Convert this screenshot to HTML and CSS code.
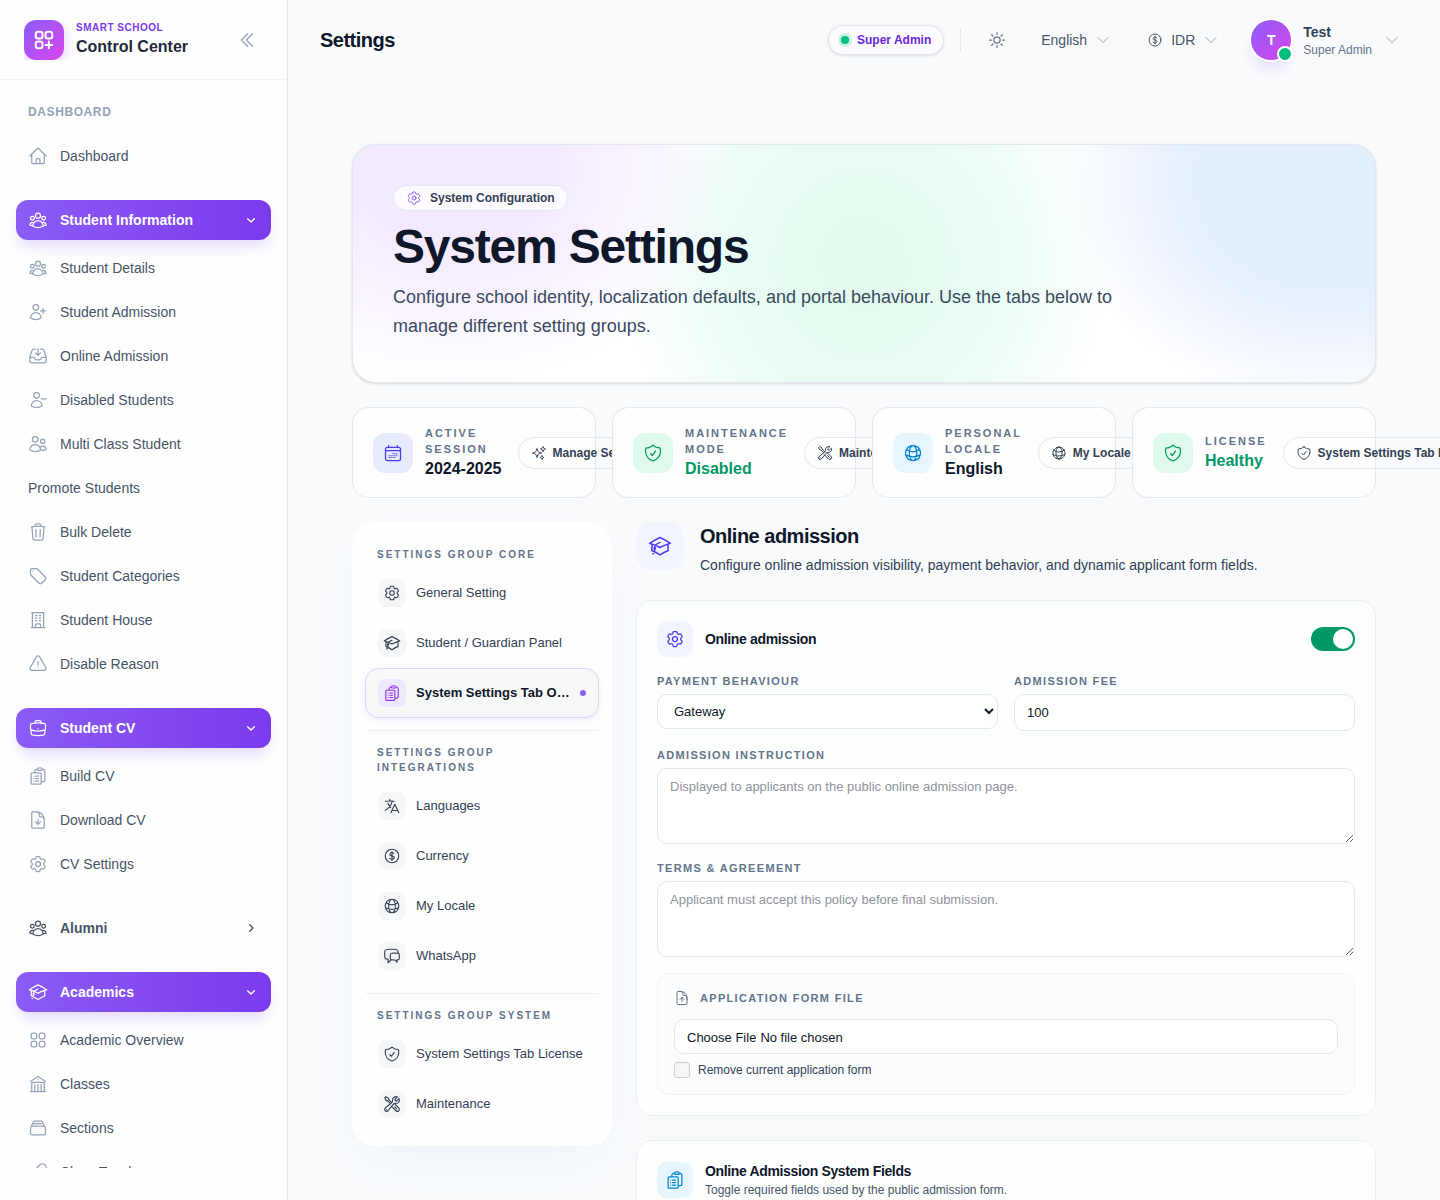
FILE: index.html
```html
<!DOCTYPE html>
<html lang="en">
<head>
    <meta charset="UTF-8">
    <meta name="viewport" content="width=device-width, initial-scale=1.0">
    <title>Settings</title>
    <link rel="stylesheet" href="styles.css">
</head>
<body>
    <!-- icon sprite -->
    <svg class="sprite" aria-hidden="true">
        <symbol id="home" viewBox="0 0 24 24"><path d="m2.25 12 8.954-8.955c.44-.439 1.152-.439 1.591 0L21.75 12M4.5 9.75v10.125c0 .621.504 1.125 1.125 1.125H9.75v-4.875c0-.621.504-1.125 1.125-1.125h2.25c.621 0 1.125.504 1.125 1.125V21h4.125c.621 0 1.125-.504 1.125-1.125V9.75M8.25 21h8.25"/></symbol>
        <symbol id="user-group" viewBox="0 0 24 24"><path d="M18 18.72a9.094 9.094 0 0 0 3.741-.479 3 3 0 0 0-4.682-2.72m.94 3.198.001.031c0 .225-.012.447-.037.666A11.944 11.944 0 0 1 12 21c-2.17 0-4.207-.576-5.963-1.584A6.062 6.062 0 0 1 6 18.719m12 0a5.971 5.971 0 0 0-.941-3.197m0 0A5.995 5.995 0 0 0 12 12.75a5.995 5.995 0 0 0-5.058 2.772m0 0a3 3 0 0 0-4.681 2.72 8.986 8.986 0 0 0 3.74.477m.94-3.197a5.971 5.971 0 0 0-.94 3.197M15 6.75a3 3 0 1 1-6 0 3 3 0 0 1 6 0Zm6 3a2.25 2.25 0 1 1-4.5 0 2.25 2.25 0 0 1 4.5 0Zm-13.5 0a2.25 2.25 0 1 1-4.5 0 2.25 2.25 0 0 1 4.5 0Z"/></symbol>
        <symbol id="user-plus" viewBox="0 0 24 24"><path d="M18 7.5v3m0 0v3m0-3h3m-3 0h-3m-2.25-4.125a3.375 3.375 0 1 1-6.75 0 3.375 3.375 0 0 1 6.75 0ZM3 19.235v-.11a6.375 6.375 0 0 1 12.75 0v.109A12.318 12.318 0 0 1 9.374 21c-2.331 0-4.512-.645-6.374-1.766Z"/></symbol>
        <symbol id="inbox" viewBox="0 0 24 24"><path d="M9 3.75H6.912a2.25 2.25 0 0 0-2.15 1.588L2.35 13.177a2.25 2.25 0 0 0-.1.661V18a2.25 2.25 0 0 0 2.25 2.25h15A2.25 2.25 0 0 0 21.75 18v-4.162c0-.224-.034-.447-.1-.661L19.24 5.338a2.25 2.25 0 0 0-2.15-1.588H15M2.25 13.5h3.86a2.25 2.25 0 0 1 2.012 1.244l.256.512a2.25 2.25 0 0 0 2.013 1.244h3.218a2.25 2.25 0 0 0 2.013-1.244l.256-.512a2.25 2.25 0 0 1 2.013-1.244h3.859M12 3v8.25m0 0-3-3m3 3 3-3"/></symbol>
        <symbol id="user-minus" viewBox="0 0 24 24"><path d="M22 10.5h-6m-2.25-4.125a3.375 3.375 0 1 1-6.75 0 3.375 3.375 0 0 1 6.75 0ZM4 19.235v-.11a6.375 6.375 0 0 1 12.75 0v.109A12.318 12.318 0 0 1 10.374 21c-2.331 0-4.512-.645-6.374-1.766Z"/></symbol>
        <symbol id="users" viewBox="0 0 24 24"><path d="M15 19.128a9.38 9.38 0 0 0 2.625.372 9.337 9.337 0 0 0 4.121-.952 4.125 4.125 0 0 0-7.533-2.493M15 19.128v-.003c0-1.113-.285-2.16-.786-3.07M15 19.128v.106A12.318 12.318 0 0 1 8.624 21c-2.331 0-4.512-.645-6.374-1.766l-.001-.109a6.375 6.375 0 0 1 11.964-3.07M12 6.375a3.375 3.375 0 1 1-6.75 0 3.375 3.375 0 0 1 6.75 0Zm8.25 2.25a2.625 2.625 0 1 1-5.25 0 2.625 2.625 0 0 1 5.25 0Z"/></symbol>
        <symbol id="trash" viewBox="0 0 24 24"><path d="m14.74 9-.346 9m-4.788 0L9.26 9m9.968-3.21c.342.052.682.107 1.022.166m-1.022-.165L18.16 19.673a2.25 2.25 0 0 1-2.244 2.077H8.084a2.25 2.25 0 0 1-2.244-2.077L4.772 5.79m14.456 0a48.108 48.108 0 0 0-3.478-.397m-12 .562c.34-.059.68-.114 1.022-.165m0 0a48.11 48.11 0 0 1 3.478-.397m7.5 0v-.916c0-1.18-.91-2.164-2.09-2.201a51.964 51.964 0 0 0-3.32 0c-1.18.037-2.09 1.022-2.09 2.201v.916m7.5 0a48.667 48.667 0 0 0-7.5 0"/></symbol>
        <symbol id="tag" viewBox="0 0 24 24"><path d="M9.568 3H5.25A2.25 2.25 0 0 0 3 5.25v4.318c0 .597.237 1.17.659 1.591l9.581 9.581c.699.699 1.78.872 2.607.33a18.095 18.095 0 0 0 5.223-5.223c.542-.827.369-1.908-.33-2.607L11.16 3.66A2.25 2.25 0 0 0 9.568 3Z"/><path d="M6 6h.008v.008H6V6Z"/></symbol>
        <symbol id="building" viewBox="0 0 24 24"><path d="M3.75 21h16.5M4.5 3h15M5.25 3v18m13.5-18v18M9 6.75h1.5m-1.5 3h1.5m-1.5 3h1.5m3-6H15m-1.5 3H15m-1.5 3H15M9 21v-3.375c0-.621.504-1.125 1.125-1.125h3.75c.621 0 1.125.504 1.125 1.125V21"/></symbol>
        <symbol id="warning" viewBox="0 0 24 24"><path d="M12 9v3.75m-9.303 3.376c-.866 1.5.217 3.374 1.948 3.374h14.71c1.73 0 2.813-1.874 1.948-3.374L13.949 3.378c-.866-1.5-3.032-1.5-3.898 0L2.697 16.126ZM12 15.75h.007v.008H12v-.008Z"/></symbol>
        <symbol id="briefcase" viewBox="0 0 24 24"><path d="M20.25 14.15v4.25c0 1.094-.787 2.036-1.872 2.18-2.087.277-4.216.42-6.378.42s-4.291-.143-6.378-.42c-1.085-.144-1.872-1.086-1.872-2.18v-4.25m16.5 0a2.18 2.18 0 0 0 .75-1.661V8.706c0-1.081-.768-2.015-1.837-2.175a48.114 48.114 0 0 0-3.413-.387m4.5 8.006c-.194.165-.42.295-.673.38A23.978 23.978 0 0 1 12 15.75c-2.648 0-5.195-.429-7.577-1.22a2.016 2.016 0 0 1-.673-.38m0 0A2.18 2.18 0 0 1 3 12.489V8.706c0-1.081.768-2.015 1.837-2.175a48.111 48.111 0 0 1 3.413-.387m7.5 0V5.25A2.25 2.25 0 0 0 13.5 3h-3a2.25 2.25 0 0 0-2.25 2.25v.894m7.5 0a48.667 48.667 0 0 0-7.5 0M12 12.75h.008v.008H12v-.008Z"/></symbol>
        <symbol id="clipboard" viewBox="0 0 24 24"><path d="M9 12h3.75M9 15h3.75M9 18h3.75m3 .75H18a2.25 2.25 0 0 0 2.25-2.25V6.108c0-1.135-.845-2.098-1.976-2.192a48.424 48.424 0 0 0-1.123-.08m-5.801 0c-.065.21-.1.433-.1.664 0 .414.336.75.75.75h4.5a.75.75 0 0 0 .75-.75 2.25 2.25 0 0 0-.1-.664m-5.8 0A2.251 2.251 0 0 1 13.5 2.25H15c1.012 0 1.867.668 2.15 1.586m-5.8 0c-.376.023-.75.05-1.124.08C9.095 4.01 8.25 4.973 8.25 6.108V8.25m0 0H4.875c-.621 0-1.125.504-1.125 1.125v11.25c0 .621.504 1.125 1.125 1.125h9.75c.621 0 1.125-.504 1.125-1.125V9.375c0-.621-.504-1.125-1.125-1.125H8.25ZM6.75 12h.008v.008H6.75V12Zm0 3h.008v.008H6.75V15Zm0 3h.008v.008H6.75V18Z"/></symbol>
        <symbol id="doc-down" viewBox="0 0 24 24"><path d="M19.5 14.25v-2.625a3.375 3.375 0 0 0-3.375-3.375h-1.5A1.125 1.125 0 0 1 13.5 7.125v-1.5a3.375 3.375 0 0 0-3.375-3.375H8.25m.75 12 3 3m0 0 3-3m-3 3v-6m-1.5-9H5.625c-.621 0-1.125.504-1.125 1.125v17.25c0 .621.504 1.125 1.125 1.125h12.75c.621 0 1.125-.504 1.125-1.125V11.25a9 9 0 0 0-9-9Z"/></symbol>
        <symbol id="doc-up" viewBox="0 0 24 24"><path d="M19.5 14.25v-2.625a3.375 3.375 0 0 0-3.375-3.375h-1.5A1.125 1.125 0 0 1 13.5 7.125v-1.5a3.375 3.375 0 0 0-3.375-3.375H8.25m6.75 12-3-3m0 0-3 3m3-3v6m-1.5-15H5.625c-.621 0-1.125.504-1.125 1.125v17.25c0 .621.504 1.125 1.125 1.125h12.75c.621 0 1.125-.504 1.125-1.125V11.25a9 9 0 0 0-9-9Z"/></symbol>
        <symbol id="cog" viewBox="0 0 24 24"><path d="M9.594 3.94c.09-.542.56-.94 1.11-.94h2.593c.55 0 1.02.398 1.11.94l.213 1.281c.063.374.313.686.645.87.074.04.147.083.22.127.325.196.72.257 1.075.124l1.217-.456a1.125 1.125 0 0 1 1.37.49l1.296 2.247a1.125 1.125 0 0 1-.26 1.431l-1.003.827c-.293.241-.438.613-.43.992a7.723 7.723 0 0 1 0 .255c-.008.378.137.75.43.991l1.004.827c.424.35.534.955.26 1.43l-1.298 2.247a1.125 1.125 0 0 1-1.369.491l-1.217-.456c-.355-.133-.75-.072-1.076.124a6.47 6.47 0 0 1-.22.128c-.331.183-.581.495-.644.869l-.213 1.281c-.09.543-.56.94-1.11.94h-2.594c-.55 0-1.019-.398-1.11-.94l-.213-1.281c-.062-.374-.312-.686-.644-.87a6.52 6.52 0 0 1-.22-.127c-.325-.196-.72-.257-1.076-.124l-1.217.456a1.125 1.125 0 0 1-1.369-.49l-1.297-2.247a1.125 1.125 0 0 1 .26-1.431l1.004-.827c.292-.24.437-.613.43-.991a6.932 6.932 0 0 1 0-.255c.007-.38-.138-.751-.43-.992l-1.004-.827a1.125 1.125 0 0 1-.26-1.43l1.297-2.247a1.125 1.125 0 0 1 1.37-.491l1.216.456c.356.133.751.072 1.076-.124.072-.044.146-.086.22-.128.332-.183.582-.495.644-.869l.214-1.28Z"/><path d="M15 12a3 3 0 1 1-6 0 3 3 0 0 1 6 0Z"/></symbol>
        <symbol id="cap" viewBox="0 0 24 24"><path d="M4.26 10.147a60.438 60.438 0 0 0-.491 6.347A48.62 48.62 0 0 1 12 20.904a48.62 48.62 0 0 1 8.232-4.41 60.46 60.46 0 0 0-.491-6.347m-15.482 0a50.636 50.636 0 0 0-2.658-.813A59.906 59.906 0 0 1 12 3.493a59.903 59.903 0 0 1 10.399 5.84c-.896.248-1.783.52-2.658.814m-15.482 0A50.717 50.717 0 0 1 12 13.489a50.702 50.702 0 0 1 7.74-3.342M6.75 15a.75.75 0 1 0 0-1.5.75.75 0 0 0 0 1.5Zm0 0v-3.675A55.378 55.378 0 0 1 12 8.443m-7.007 11.55A5.981 5.981 0 0 0 6.75 15.75v-1.5"/></symbol>
        <symbol id="squares" viewBox="0 0 24 24"><path d="M3.75 6A2.25 2.25 0 0 1 6 3.75h2.25A2.25 2.25 0 0 1 10.5 6v2.25a2.25 2.25 0 0 1-2.25 2.25H6a2.25 2.25 0 0 1-2.25-2.25V6ZM3.75 15.75A2.25 2.25 0 0 1 6 13.5h2.25a2.25 2.25 0 0 1 2.25 2.25V18a2.25 2.25 0 0 1-2.25 2.25H6A2.25 2.25 0 0 1 3.75 18v-2.25ZM13.5 6a2.25 2.25 0 0 1 2.25-2.25H18A2.25 2.25 0 0 1 20.25 6v2.25A2.25 2.25 0 0 1 18 10.5h-2.25a2.25 2.25 0 0 1-2.25-2.25V6ZM13.5 15.75a2.25 2.25 0 0 1 2.25-2.25H18a2.25 2.25 0 0 1 2.25 2.25V18A2.25 2.25 0 0 1 18 20.25h-2.25A2.25 2.25 0 0 1 13.5 18v-2.25Z"/></symbol>
        <symbol id="squares-plus" viewBox="0 0 24 24"><path d="M13.5 16.875h3.375m0 0h3.375m-3.375 0V13.5m0 3.375v3.375M6 10.5h2.25a2.25 2.25 0 0 0 2.25-2.25V6a2.25 2.25 0 0 0-2.25-2.25H6A2.25 2.25 0 0 0 3.75 6v2.25A2.25 2.25 0 0 0 6 10.5Zm0 9.75h2.25A2.25 2.25 0 0 0 10.5 18v-2.25a2.25 2.25 0 0 0-2.25-2.25H6a2.25 2.25 0 0 0-2.25 2.25V18A2.25 2.25 0 0 0 6 20.25Zm9.75-9.75H18a2.25 2.25 0 0 0 2.25-2.25V6A2.25 2.25 0 0 0 18 3.75h-2.25A2.25 2.25 0 0 0 13.5 6v2.25a2.25 2.25 0 0 0 2.25 2.25Z"/></symbol>
        <symbol id="library" viewBox="0 0 24 24"><path d="M12 21v-8.25M15.75 21v-8.25M8.25 21v-8.25M3 9l9-6 9 6m-1.5 12V10.332A48.36 48.36 0 0 0 12 9.75c-2.551 0-5.056.2-7.5.582V21M3 21h18M12 6.75h.008v.008H12V6.75Z"/></symbol>
        <symbol id="stack" viewBox="0 0 24 24"><path d="M6 6.878V6a2.25 2.25 0 0 1 2.25-2.25h7.5A2.25 2.25 0 0 1 18 6v.878m-12 0c.235-.083.487-.128.75-.128h10.5c.263 0 .515.045.75.128m-12 0A2.25 2.25 0 0 0 4.5 9v.878m13.5-3A2.25 2.25 0 0 1 19.5 9v.878m0 0a2.246 2.246 0 0 0-.75-.128H5.25c-.263 0-.515.045-.75.128m15 0A2.25 2.25 0 0 1 21 12v6a2.25 2.25 0 0 1-2.25 2.25H5.25A2.25 2.25 0 0 1 3 18v-6c0-.98.626-1.813 1.5-2.122"/></symbol>
        <symbol id="link" viewBox="0 0 24 24"><path d="M13.19 8.688a4.5 4.5 0 0 1 1.242 7.244l-4.5 4.5a4.5 4.5 0 0 1-6.364-6.364l1.757-1.757m13.35-.622 1.757-1.757a4.5 4.5 0 0 0-6.364-6.364l-4.5 4.5a4.5 4.5 0 0 0 1.242 7.244"/></symbol>
        <symbol id="collapse" viewBox="0 0 24 24"><path d="m18.75 4.5-7.5 7.5 7.5 7.5m-6-15L5.25 12l7.5 7.5"/></symbol>
        <symbol id="caret-down" viewBox="0 0 24 24"><path d="m7 10 5 5 5-5"/></symbol>
        <symbol id="caret-right" viewBox="0 0 24 24"><path d="m10 7 5 5-5 5"/></symbol>
        <symbol id="chevron" viewBox="0 0 24 24"><path d="m19.5 8.25-7.5 7.5-7.5-7.5"/></symbol>
        <symbol id="sun" viewBox="0 0 24 24"><path d="M12 3v2.25m6.364.386-1.591 1.591M21 12h-2.25m-.386 6.364-1.591-1.591M12 18.75V21m-4.773-4.227-1.591 1.591M5.25 12H3m4.227-4.773L5.636 5.636M15.75 12a3.75 3.75 0 1 1-7.5 0 3.75 3.75 0 0 1 7.5 0Z"/></symbol>
        <symbol id="dollar" viewBox="0 0 24 24"><path d="M12 6v12m-3-2.818.879.659c1.171.879 3.07.879 4.242 0 1.172-.879 1.172-2.303 0-3.182C13.536 12.219 12.768 12 12 12c-.725 0-1.45-.22-2.003-.659-1.106-.879-1.106-2.303 0-3.182s2.9-.879 4.006 0l.415.33M21 12a9 9 0 1 1-18 0 9 9 0 0 1 18 0Z"/></symbol>
        <symbol id="calendar" viewBox="0 0 24 24"><path d="M6.75 3v2.25M17.25 3v2.25M3 18.75V7.5a2.25 2.25 0 0 1 2.25-2.25h13.5A2.25 2.25 0 0 1 21 7.5v11.25m-18 0A2.25 2.25 0 0 0 5.25 21h13.5A2.25 2.25 0 0 0 21 18.75m-18 0v-7.5A2.25 2.25 0 0 1 5.25 9h13.5A2.25 2.25 0 0 1 21 11.25v7.5m-9-6h.008v.008H12v-.008ZM12 15h.008v.008H12V15Zm0 2.25h.008v.008H12v-.008ZM9.75 15h.008v.008H9.75V15Zm0 2.25h.008v.008H9.75v-.008ZM7.5 15h.008v.008H7.5V15Zm0 2.25h.008v.008H7.5v-.008Zm6.75-4.5h.008v.008h-.008v-.008Zm0 2.25h.008v.008h-.008V15Zm0 2.25h.008v.008h-.008v-.008Zm2.25-4.5h.008v.008H16.5v-.008Zm0 2.25h.008v.008H16.5V15Z"/></symbol>
        <symbol id="shield" viewBox="0 0 24 24"><path d="M9 12.75 11.25 15 15 9.75m-3-7.036A11.959 11.959 0 0 1 3.598 6 11.99 11.99 0 0 0 3 9.749c0 5.592 3.824 10.29 9 11.623 5.176-1.332 9-6.03 9-11.622 0-1.31-.21-2.571-.598-3.751h-.152c-3.196 0-6.1-1.248-8.25-3.285Z"/></symbol>
        <symbol id="globe" viewBox="0 0 24 24"><path d="M12 21a9.004 9.004 0 0 0 8.716-6.747M12 21a9.004 9.004 0 0 1-8.716-6.747M12 21c2.485 0 4.5-4.03 4.5-9S14.485 3 12 3m0 18c-2.485 0-4.5-4.03-4.5-9S9.515 3 12 3m0 0a8.997 8.997 0 0 1 7.843 4.582M12 3a8.997 8.997 0 0 0-7.843 4.582m15.686 0A11.953 11.953 0 0 1 12 10.5c-2.998 0-5.74-1.1-7.843-2.918m15.686 0A8.959 8.959 0 0 1 21 12c0 .778-.099 1.533-.284 2.253m0 0A17.919 17.919 0 0 1 12 16.5c-3.162 0-6.133-.815-8.716-2.247m0 0A9.015 9.015 0 0 1 3 12c0-1.605.42-3.113 1.157-4.418"/></symbol>
        <symbol id="sparkles" viewBox="0 0 24 24"><path d="M9.813 15.904 9 18.75l-.813-2.846a4.5 4.5 0 0 0-3.09-3.09L2.25 12l2.846-.813a4.5 4.5 0 0 0 3.09-3.09L9 5.25l.813 2.846a4.5 4.5 0 0 0 3.09 3.09L15.75 12l-2.846.813a4.5 4.5 0 0 0-3.09 3.09ZM18.259 8.715 18 9.75l-.259-1.035a3.375 3.375 0 0 0-2.455-2.456L14.25 6l1.036-.259a3.375 3.375 0 0 0 2.455-2.456L18 2.25l.259 1.035a3.375 3.375 0 0 0 2.456 2.456L21.75 6l-1.035.259a3.375 3.375 0 0 0-2.456 2.456ZM16.894 20.567 16.5 21.75l-.394-1.183a2.25 2.25 0 0 0-1.423-1.423L13.5 18.75l1.183-.394a2.25 2.25 0 0 0 1.423-1.423l.394-1.183.394 1.183a2.25 2.25 0 0 0 1.423 1.423l1.183.394-1.183.394a2.25 2.25 0 0 0-1.423 1.423Z"/></symbol>
        <symbol id="tools" viewBox="0 0 24 24"><path d="M11.42 15.17 17.25 21A2.652 2.652 0 0 0 21 17.25l-5.877-5.877M11.42 15.17l2.496-3.03c.317-.384.74-.626 1.208-.766M11.42 15.17l-4.655 5.653a2.548 2.548 0 1 1-3.586-3.586l6.837-5.63m5.108-.233c.55-.164 1.163-.188 1.743-.14a4.5 4.5 0 0 0 4.486-6.336l-3.276 3.277a3.004 3.004 0 0 1-2.25-2.25l3.276-3.276a4.5 4.5 0 0 0-6.336 4.486c.091 1.076-.071 2.264-.904 2.95l-.102.085m-1.745 1.437L5.909 7.5H4.5L2.25 3.75l1.5-1.5L7.5 4.5v1.409l4.26 4.26m-1.745 1.437 1.745-1.437m6.615 8.206L15.75 15.75M4.867 19.125h.008v.008h-.008v-.008Z"/></symbol>
        <symbol id="language" viewBox="0 0 24 24"><path d="m10.5 21 5.25-11.25L21 21m-9-3h7.5M3 5.621a48.474 48.474 0 0 1 6-.371m0 0c1.12 0 2.233.038 3.334.114M9 5.25V3m3.334 2.364C11.176 10.658 7.69 15.08 3 17.502m9.334-12.138c.896.061 1.785.147 2.666.257m-4.589 8.495a18.023 18.023 0 0 1-3.827-5.802"/></symbol>
        <symbol id="chat" viewBox="0 0 24 24"><path d="M20.25 8.511c.884.284 1.5 1.128 1.5 2.097v4.286c0 1.136-.847 2.1-1.98 2.193-.34.027-.68.052-1.02.072v3.091l-3-3c-1.354 0-2.694-.055-4.02-.163a2.115 2.115 0 0 1-.825-.242m9.345-8.334a2.126 2.126 0 0 0-.476-.095 48.64 48.64 0 0 0-8.048 0c-1.131.094-1.976 1.057-1.976 2.192v4.286c0 .837.46 1.58 1.155 1.951m9.345-8.334V6.637c0-1.621-1.152-3.026-2.76-3.235A48.455 48.455 0 0 0 11.25 3c-2.115 0-4.198.137-6.24.402-1.608.209-2.76 1.614-2.76 3.235v6.226c0 1.621 1.152 3.026 2.76 3.235.577.075 1.157.14 1.74.194V21l4.155-4.155"/></symbol>
    </svg>

    <div class="app">
        <aside class="sidebar">
            <div class="sidebar-header">
                <a href="#" class="brand">
                    <span class="brand-logo"><svg class="icon"><use href="#squares-plus"/></svg></span>
                    <span class="brand-text">
                        <span class="brand-small">SMART SCHOOL</span>
                        <span class="brand-name">Control Center</span>
                    </span>
                </a>
                <button type="button" class="collapse-btn" aria-label="Collapse sidebar"><svg class="icon"><use href="#collapse"/></svg></button>
            </div>

            <nav class="nav">
                <div class="nav-section">
                    <div class="nav-label">DASHBOARD</div>
                    <a href="#" class="nav-item"><svg class="icon"><use href="#home"/></svg>Dashboard</a>
                </div>

                <div class="nav-section">
                    <button type="button" class="nav-group open"><svg class="icon"><use href="#user-group"/></svg><span>Student Information</span><svg class="caret"><use href="#caret-down"/></svg></button>
                    <div class="nav-children">
                        <a href="#" class="nav-item"><svg class="icon"><use href="#user-group"/></svg>Student Details</a>
                        <a href="#" class="nav-item"><svg class="icon"><use href="#user-plus"/></svg>Student Admission</a>
                        <a href="#" class="nav-item"><svg class="icon"><use href="#inbox"/></svg>Online Admission</a>
                        <a href="#" class="nav-item"><svg class="icon"><use href="#user-minus"/></svg>Disabled Students</a>
                        <a href="#" class="nav-item"><svg class="icon"><use href="#users"/></svg>Multi Class Student</a>
                        <a href="#" class="nav-item">Promote Students</a>
                        <a href="#" class="nav-item"><svg class="icon"><use href="#trash"/></svg>Bulk Delete</a>
                        <a href="#" class="nav-item"><svg class="icon"><use href="#tag"/></svg>Student Categories</a>
                        <a href="#" class="nav-item"><svg class="icon"><use href="#building"/></svg>Student House</a>
                        <a href="#" class="nav-item"><svg class="icon"><use href="#warning"/></svg>Disable Reason</a>
                    </div>
                </div>

                <div class="nav-section">
                    <button type="button" class="nav-group open"><svg class="icon"><use href="#briefcase"/></svg><span>Student CV</span><svg class="caret"><use href="#caret-down"/></svg></button>
                    <div class="nav-children">
                        <a href="#" class="nav-item"><svg class="icon"><use href="#clipboard"/></svg>Build CV</a>
                        <a href="#" class="nav-item"><svg class="icon"><use href="#doc-down"/></svg>Download CV</a>
                        <a href="#" class="nav-item"><svg class="icon"><use href="#cog"/></svg>CV Settings</a>
                    </div>
                </div>

                <div class="nav-section">
                    <button type="button" class="nav-group"><svg class="icon"><use href="#user-group"/></svg><span>Alumni</span><svg class="caret"><use href="#caret-right"/></svg></button>
                </div>

                <div class="nav-section">
                    <button type="button" class="nav-group open"><svg class="icon"><use href="#cap"/></svg><span>Academics</span><svg class="caret"><use href="#caret-down"/></svg></button>
                    <div class="nav-children">
                        <a href="#" class="nav-item"><svg class="icon"><use href="#squares"/></svg>Academic Overview</a>
                        <a href="#" class="nav-item"><svg class="icon"><use href="#library"/></svg>Classes</a>
                        <a href="#" class="nav-item"><svg class="icon"><use href="#stack"/></svg>Sections</a>
                        <a href="#" class="nav-item"><svg class="icon"><use href="#link"/></svg>Class Teacher</a>
                    </div>
                </div>
            </nav>
        </aside>

        <div class="main">
            <header class="topbar">
                <h2 class="topbar-title">Settings</h2>
                <div class="topbar-right">
                    <span class="role-pill"><span class="role-dot"></span>Super Admin</span>
                    <span class="divider"></span>
                    <div class="topbar-tools">
                        <button type="button" class="tool-btn theme-btn" aria-label="Toggle theme"><svg class="icon"><use href="#sun"/></svg></button>
                        <button type="button" class="tool-btn">English<svg class="icon-sm muted"><use href="#chevron"/></svg></button>
                        <button type="button" class="tool-btn"><svg class="icon-sm"><use href="#dollar"/></svg>IDR<svg class="icon-sm muted"><use href="#chevron"/></svg></button>
                        <button type="button" class="profile-btn">
                            <span class="avatar">T<span class="avatar-status"></span></span>
                            <span class="profile-text">
                                <span class="profile-name">Test</span>
                                <span class="profile-role">Super Admin</span>
                            </span>
                            <svg class="icon-sm muted"><use href="#chevron"/></svg>
                        </button>
                    </div>
                </div>
            </header>

            <main class="content">
                <section class="hero">
                    <span class="hero-chip"><svg class="icon-sm"><use href="#cog"/></svg>System Configuration</span>
                    <h1>System Settings</h1>
                    <p>Configure school identity, localization defaults, and portal behaviour. Use the tabs below to manage different setting groups.</p>
                </section>

                <section class="stats">
                    <div class="stat">
                        <span class="stat-icon indigo"><svg class="icon"><use href="#calendar"/></svg></span>
                        <div class="stat-text">
                            <div class="stat-label">ACTIVE SESSION</div>
                            <div class="stat-value">2024-2025</div>
                        </div>
                        <a href="#" class="stat-link"><svg class="icon-sm"><use href="#sparkles"/></svg>Manage Sessions</a>
                    </div>
                    <div class="stat">
                        <span class="stat-icon green"><svg class="icon"><use href="#shield"/></svg></span>
                        <div class="stat-text">
                            <div class="stat-label">MAINTENANCE MODE</div>
                            <div class="stat-value ok">Disabled</div>
                        </div>
                        <a href="#" class="stat-link"><svg class="icon-sm"><use href="#tools"/></svg>Maintenance</a>
                    </div>
                    <div class="stat">
                        <span class="stat-icon sky"><svg class="icon"><use href="#globe"/></svg></span>
                        <div class="stat-text">
                            <div class="stat-label">PERSONAL LOCALE</div>
                            <div class="stat-value">English</div>
                        </div>
                        <a href="#" class="stat-link"><svg class="icon-sm"><use href="#globe"/></svg>My Locale</a>
                    </div>
                    <div class="stat">
                        <span class="stat-icon green"><svg class="icon"><use href="#shield"/></svg></span>
                        <div class="stat-text">
                            <div class="stat-label">LICENSE</div>
                            <div class="stat-value ok">Healthy</div>
                        </div>
                        <a href="#" class="stat-link"><svg class="icon-sm"><use href="#shield"/></svg>System Settings Tab License</a>
                    </div>
                </section>

                <div class="settings">
                    <nav class="tabs">
                        <div class="tab-group">
                            <div class="tab-label">SETTINGS GROUP CORE</div>
                            <a href="#" class="tab"><span class="tab-icon"><svg><use href="#cog"/></svg></span><span class="tab-text">General Setting</span></a>
                            <a href="#" class="tab"><span class="tab-icon"><svg><use href="#cap"/></svg></span><span class="tab-text">Student / Guardian Panel</span></a>
                            <a href="#" class="tab active"><span class="tab-icon"><svg><use href="#clipboard"/></svg></span><span class="tab-text">System Settings Tab Online Admission</span><span class="tab-dot"></span></a>
                        </div>
                        <div class="tab-group">
                            <div class="tab-label">SETTINGS GROUP INTEGRATIONS</div>
                            <a href="#" class="tab"><span class="tab-icon"><svg><use href="#language"/></svg></span><span class="tab-text">Languages</span></a>
                            <a href="#" class="tab"><span class="tab-icon"><svg><use href="#dollar"/></svg></span><span class="tab-text">Currency</span></a>
                            <a href="#" class="tab"><span class="tab-icon"><svg><use href="#globe"/></svg></span><span class="tab-text">My Locale</span></a>
                            <a href="#" class="tab"><span class="tab-icon"><svg><use href="#chat"/></svg></span><span class="tab-text">WhatsApp</span></a>
                        </div>
                        <div class="tab-group">
                            <div class="tab-label">SETTINGS GROUP SYSTEM</div>
                            <a href="#" class="tab"><span class="tab-icon"><svg><use href="#shield"/></svg></span><span class="tab-text">System Settings Tab License</span></a>
                            <a href="#" class="tab"><span class="tab-icon"><svg><use href="#tools"/></svg></span><span class="tab-text">Maintenance</span></a>
                        </div>
                    </nav>

                    <div class="panel">
                        <div class="panel-head">
                            <span class="panel-icon"><svg><use href="#cap"/></svg></span>
                            <div>
                                <h2>Online admission</h2>
                                <p>Configure online admission visibility, payment behavior, and dynamic applicant form fields.</p>
                            </div>
                        </div>

                        <form class="card">
                            <div class="card-head">
                                <span class="card-icon violet"><svg class="icon"><use href="#cog"/></svg></span>
                                <h3 id="online-title">Online admission</h3>
                                <input type="checkbox" class="switch" aria-labelledby="online-title" checked>
                            </div>

                            <div class="row">
                                <div class="field">
                                    <label for="payment">PAYMENT BEHAVIOUR</label>
                                    <select id="payment">
                                        <option>Gateway</option>
                                        <option>Offline</option>
                                    </select>
                                </div>
                                <div class="field">
                                    <label for="fee">ADMISSION FEE</label>
                                    <input type="text" id="fee" value="100">
                                </div>
                            </div>

                            <div class="field">
                                <label for="instruction">ADMISSION INSTRUCTION</label>
                                <textarea id="instruction" rows="3" placeholder="Displayed to applicants on the public online admission page."></textarea>
                            </div>

                            <div class="field">
                                <label for="terms">TERMS &amp; AGREEMENT</label>
                                <textarea id="terms" rows="3" placeholder="Applicant must accept this policy before final submission."></textarea>
                            </div>

                            <div class="file-box">
                                <label class="file-title" for="form-file"><svg class="icon-sm"><use href="#doc-up"/></svg>APPLICATION FORM FILE</label>
                                <input type="file" id="form-file">
                                <label class="check"><input type="checkbox">Remove current application form</label>
                            </div>
                        </form>

                        <div class="card">
                            <div class="card-head">
                                <span class="card-icon sky"><svg class="icon"><use href="#clipboard"/></svg></span>
                                <div>
                                    <h3>Online Admission System Fields</h3>
                                    <p>Toggle required fields used by the public admission form.</p>
                                </div>
                            </div>
                        </div>
                    </div>
                </div>
            </main>
        </div>
    </div>
</body>
</html>
```

FILE: styles.css
```css
* {
    box-sizing: border-box;
}

body {
    margin: 0;
    font-family: "Liberation Sans", Arial, Helvetica, sans-serif;
    font-size: 14px;
    line-height: 20px;
    color: #0f172a;
    background-color: #f8fafc;
}

h1, h2, h3, p {
    margin: 0;
}

a {
    color: inherit;
    text-decoration: none;
}

button {
    font: inherit;
    color: inherit;
    border: none;
    background: none;
    cursor: pointer;
}

svg {
    fill: none;
    stroke: currentColor;
    stroke-width: 1.5;
    stroke-linecap: round;
    stroke-linejoin: round;
    flex-shrink: 0;
}

.sprite {
    display: none;
}

.icon {
    width: 20px;
    height: 20px;
}

.icon-sm {
    width: 16px;
    height: 16px;
}

.muted {
    color: #94a3b8;
}

.app {
    display: flex;
    height: 100vh;
}

/* Sidebar */
.sidebar {
    width: 288px;
    flex-shrink: 0;
    display: flex;
    flex-direction: column;
    padding-bottom: 32px;
    background-color: #fefefe;
    border-right: 1px solid #e2e8f0;
}

.sidebar-header {
    display: flex;
    align-items: center;
    justify-content: space-between;
    flex-shrink: 0;
    height: 80px;
    padding: 0 24px;
    border-bottom: 1px solid #f1f5f9;
}

.brand {
    display: flex;
    align-items: center;
    gap: 12px;
    overflow: hidden;
}

.brand-logo {
    display: flex;
    align-items: center;
    justify-content: center;
    width: 40px;
    height: 40px;
    border-radius: 12px;
    color: #fff;
    background: linear-gradient(135deg, #8b5cf6, #d946ef);
    box-shadow: 0 4px 12px rgba(168, 85, 247, 0.3);
}

.brand-logo .icon {
    width: 24px;
    height: 24px;
    stroke-width: 2;
}

.brand-text {
    display: flex;
    flex-direction: column;
}

.brand-small {
    font-size: 10px;
    line-height: 15px;
    font-weight: 600;
    letter-spacing: 0.05em;
    color: #7c3aed;
}

.brand-name {
    font-size: 16px;
    line-height: 24px;
    font-weight: 700;
    color: #1e293b;
}

.collapse-btn {
    display: flex;
    padding: 6px;
    color: #94a3b8;
}

.nav {
    flex: 1;
    overflow: hidden;
    padding: 24px 16px 0;
}

.nav-section {
    margin-bottom: 24px;
}

.nav-label {
    padding: 0 12px;
    margin-bottom: 16px;
    font-size: 12px;
    line-height: 16px;
    font-weight: 600;
    letter-spacing: 0.05em;
    color: #94a3b8;
}

.nav-item,
.nav-group {
    display: flex;
    align-items: center;
    gap: 12px;
    width: 100%;
    height: 40px;
    padding: 0 12px;
    border-radius: 12px;
    color: #475569;
    text-align: left;
}

.nav-item .icon {
    color: #94a3b8;
}

.nav-group {
    font-weight: 600;
}

.nav-group span {
    flex: 1;
}

.nav-group.open {
    color: #fff;
    background: linear-gradient(90deg, #8b5cf6, #7c3aed);
    box-shadow: 0 8px 15px -3px rgba(139, 92, 246, 0.25);
}

.caret {
    width: 16px;
    height: 16px;
    stroke-width: 2;
}

.nav-children {
    display: flex;
    flex-direction: column;
    gap: 4px;
    margin-top: 8px;
}

/* Top bar */
.main {
    flex: 1;
    min-width: 0;
    overflow-x: hidden;
    overflow-y: auto;
    scrollbar-width: none;
}

.topbar {
    display: flex;
    align-items: center;
    justify-content: space-between;
    height: 80px;
    padding: 0 32px;
}

.topbar-title {
    font-size: 20px;
    line-height: 28px;
    letter-spacing: -0.025em;
}

.topbar-right {
    display: flex;
    align-items: center;
    gap: 16px;
}

.role-pill {
    display: flex;
    align-items: center;
    gap: 8px;
    height: 30px;
    padding: 0 12px;
    border: 1px solid #e2e8f0;
    border-radius: 15px;
    font-size: 12px;
    font-weight: 600;
    color: #6d28d9;
    background-color: #fdfdff;
    box-shadow: 0 1px 3px rgba(15, 23, 42, 0.12);
}

.role-dot {
    width: 8px;
    height: 8px;
    border-radius: 50%;
    background-color: #00bc7d;
    box-shadow: 0 0 0 3px #c9f3e4;
}

.divider {
    width: 1px;
    height: 24px;
    background-color: #e2e8f0;
}

.topbar-tools {
    display: flex;
    align-items: center;
    gap: 12px;
}

.tool-btn {
    display: flex;
    align-items: center;
    gap: 8px;
    height: 40px;
    padding: 0 12px;
    color: #475569;
}

.theme-btn {
    padding: 0 10px;
    color: #64748b;
}

.profile-btn {
    display: flex;
    align-items: center;
    gap: 12px;
    padding: 4px 8px;
    text-align: left;
}

.avatar {
    position: relative;
    display: flex;
    align-items: center;
    justify-content: center;
    width: 40px;
    height: 40px;
    border-radius: 50%;
    color: #fff;
    font-weight: 700;
    background: linear-gradient(135deg, #8b5cf6, #d946ef);
    box-shadow: 0 0 0 2px #fff, 0 10px 15px -3px rgba(139, 92, 246, 0.2);
}

.avatar-status {
    position: absolute;
    right: -2px;
    bottom: -2px;
    width: 16px;
    height: 16px;
    border: 2px solid #fff;
    border-radius: 50%;
    background-color: #00bc7d;
}

.profile-text {
    display: flex;
    flex-direction: column;
}

.profile-name {
    line-height: 20px;
    font-weight: 600;
    color: #334155;
}

.profile-role {
    font-size: 12px;
    line-height: 16px;
    color: #64748b;
}

/* Content */
.content {
    display: flex;
    flex-direction: column;
    gap: 24px;
    padding: 64px;
}

.hero {
    display: flex;
    flex-direction: column;
    align-items: flex-start;
    gap: 12px;
    padding: 40px 40px 41px;
    border: 1px solid #e2e8f0;
    border-radius: 24px;
    background:
        radial-gradient(280px 220px at 10% 10%, #f4eaff 35%, rgba(244, 234, 255, 0)),
        radial-gradient(250px 260px at 50% 50%, #dffaeb, #e9fcf5 55%, rgba(233, 252, 245, 0)),
        radial-gradient(270px 230px at 95% 15%, #e1effe 45%, #ecf2fe 65%, rgba(236, 242, 254, 0)),
        #fff;
    box-shadow: 0 1px 3px rgba(15, 23, 42, 0.15);
}

.hero-chip {
    display: flex;
    align-items: center;
    gap: 8px;
    padding: 4px 12px;
    border: 1px solid #e2e8f0;
    border-radius: 13px;
    font-size: 12px;
    line-height: 16px;
    font-weight: 600;
    color: #334155;
    background-color: rgba(255, 255, 255, 0.8);
}

.hero-chip svg {
    color: #8b5cf6;
}

.hero h1 {
    font-size: 48px;
    line-height: 48px;
    letter-spacing: -0.025em;
}

.hero p {
    max-width: 768px;
    font-size: 18px;
    line-height: 29px;
    color: #3b4a60;
}

.stats {
    display: grid;
    grid-template-columns: repeat(4, minmax(0, 1fr));
    gap: 16px;
}

.stat {
    /* own layer, so that a card covers a link that runs out of the one before it */
    isolation: isolate;
    display: flex;
    align-items: center;
    min-height: 91px;
    padding: 16px 20px;
    border: 1px solid #e2e8f0;
    border-radius: 16px;
    background-color: #fefefe;
}

.stat-icon {
    display: flex;
    align-items: center;
    justify-content: center;
    flex-shrink: 0;
    width: 40px;
    height: 40px;
    margin-right: 12px;
    border-radius: 12px;
}

.indigo {
    color: #4f39f6;
    background-color: #e6ebfe;
}

.green {
    color: #009966;
    background-color: #dffaeb;
}

.sky {
    color: #0084d1;
    background-color: #e6f5fe;
}

.violet {
    color: #4f39f6;
    background-color: #f2f4ff;
}

.stat-text {
    flex: 1 1 0;
    min-width: min-content;
    margin-right: 16px;
}

.stat-label {
    font-size: 11px;
    line-height: 16px;
    font-weight: 600;
    letter-spacing: 0.18em;
    color: #64748b;
}

.stat-value {
    font-size: 16px;
    line-height: 24px;
    font-weight: 600;
    white-space: nowrap;
}

.stat-value.ok {
    color: #009966;
}

.stat-link {
    display: flex;
    align-items: center;
    flex-shrink: 0;
    gap: 6px;
    height: 32px;
    padding: 0 12px;
    border: 1px solid #e2e8f0;
    border-radius: 16px;
    font-size: 12px;
    font-weight: 600;
    white-space: nowrap;
    color: #334155;
}

/* Settings tabs */
.settings {
    display: grid;
    grid-template-columns: 260px minmax(0, 1fr);
    align-items: start;
    gap: 24px;
}

.tabs {
    padding: 13px;
    border-radius: 24px;
    background-color: #fefefe;
    box-shadow: 0 20px 50px -12px rgba(96, 145, 246, 0.07);
}

.tab-group {
    padding: 12px 0 4px;
}

.tab-group + .tab-group {
    margin-top: 8px;
    padding-top: 14px;
    border-top: 1px solid #eef1f4;
}

.tab-label {
    padding: 0 12px;
    margin-bottom: 6px;
    font-size: 10px;
    line-height: 15px;
    font-weight: 600;
    letter-spacing: 0.2em;
    color: #64748b;
}

.tab {
    display: flex;
    align-items: center;
    gap: 10px;
    height: 50px;
    padding: 0 12px;
    border: 1px solid transparent;
    border-radius: 14px;
    font-size: 13px;
    color: #334155;
}

.tab-icon {
    display: flex;
    align-items: center;
    justify-content: center;
    flex-shrink: 0;
    width: 28px;
    height: 28px;
    border-radius: 8px;
    background-color: #f5f6f7;
}

.tab-icon svg {
    width: 18px;
    height: 18px;
}

.tab-text {
    flex: 1;
    overflow: hidden;
    text-overflow: ellipsis;
    white-space: nowrap;
}

.tab.active {
    border-color: #ddd6fe;
    font-weight: 600;
    color: #0f172a;
    background-color: #f7f8f8;
    box-shadow: 0 2px 6px rgba(139, 92, 246, 0.12);
}

.tab.active .tab-icon {
    color: #9333ea;
    background-color: #ede9fe;
}

.tab-dot {
    width: 6px;
    height: 6px;
    border-radius: 50%;
    background-color: #8b5cf6;
}

/* Form panel */
.panel {
    display: flex;
    flex-direction: column;
    gap: 24px;
}

.panel-head {
    display: flex;
    gap: 16px;
}

.panel-icon {
    display: flex;
    align-items: center;
    justify-content: center;
    flex-shrink: 0;
    width: 48px;
    height: 48px;
    border-radius: 16px;
    color: #4f39f6;
    background-color: #f0f5ff;
}

.panel-icon svg {
    width: 24px;
    height: 24px;
}

.panel-head h2 {
    font-size: 20px;
    line-height: 28px;
    letter-spacing: -0.025em;
}

.panel-head p {
    margin-top: 4px;
    line-height: 22px;
    color: #334155;
}

.card {
    display: flex;
    flex-direction: column;
    gap: 16px;
    padding: 20px;
    border: 1px solid #eceff3;
    border-radius: 16px;
    background-color: #fdfefe;
}

.card-head {
    display: flex;
    align-items: center;
    gap: 12px;
}

.card-icon {
    display: flex;
    align-items: center;
    justify-content: center;
    flex-shrink: 0;
    width: 36px;
    height: 36px;
    border-radius: 10px;
}

.card-head h3 {
    font-size: 14px;
    line-height: 20px;
    letter-spacing: -0.025em;
}

.card-head p {
    font-size: 12px;
    line-height: 18px;
    color: #475569;
}

.switch {
    appearance: none;
    width: 44px;
    height: 24px;
    margin: 0 0 0 auto;
    padding: 2px;
    border-radius: 12px;
    background-color: #cbd5e1;
    cursor: pointer;
}

.switch::before {
    content: "";
    display: block;
    width: 20px;
    height: 20px;
    border-radius: 50%;
    background-color: #fff;
}

.switch:checked {
    background-color: #009966;
}

.switch:checked::before {
    margin-left: auto;
}

.row {
    display: grid;
    grid-template-columns: 1fr 1fr;
    gap: 16px;
}

.field label,
.file-title {
    display: block;
    margin-bottom: 5px;
    font-size: 11px;
    line-height: 16px;
    font-weight: 600;
    letter-spacing: 0.12em;
    color: #64748b;
}

select,
textarea,
input[type="text"],
input[type="file"] {
    display: block;
    width: 100%;
    padding: 8px 12px;
    border: 1px solid #e2e8f0;
    border-radius: 10px;
    font-family: inherit;
    font-size: 13px;
    line-height: 19px;
    color: #0f172a;
    background-color: #fff;
}

select,
input[type="file"] {
    height: 35px;
}

textarea {
    min-height: 76px;
    resize: vertical;
}

textarea::placeholder {
    color: #8f939d;
}

.file-box {
    padding: 16px;
    border: 1px solid #f1f3f7;
    border-radius: 12px;
    background-color: #fbfcfe;
}

.file-title {
    display: flex;
    align-items: center;
    gap: 10px;
    margin-bottom: 13px;
}

input[type="file"]::file-selector-button {
    padding: 0;
    border: none;
    font: inherit;
    color: inherit;
    background: none;
}

.check {
    display: flex;
    align-items: center;
    gap: 8px;
    margin-top: 8px;
    font-size: 12px;
    line-height: 16px;
    color: #334155;
}

.check input {
    appearance: none;
    width: 16px;
    height: 16px;
    margin: 0;
    border: 1px solid #cfcfd2;
    border-radius: 3px;
    background-color: #f6f6f6;
}
```
